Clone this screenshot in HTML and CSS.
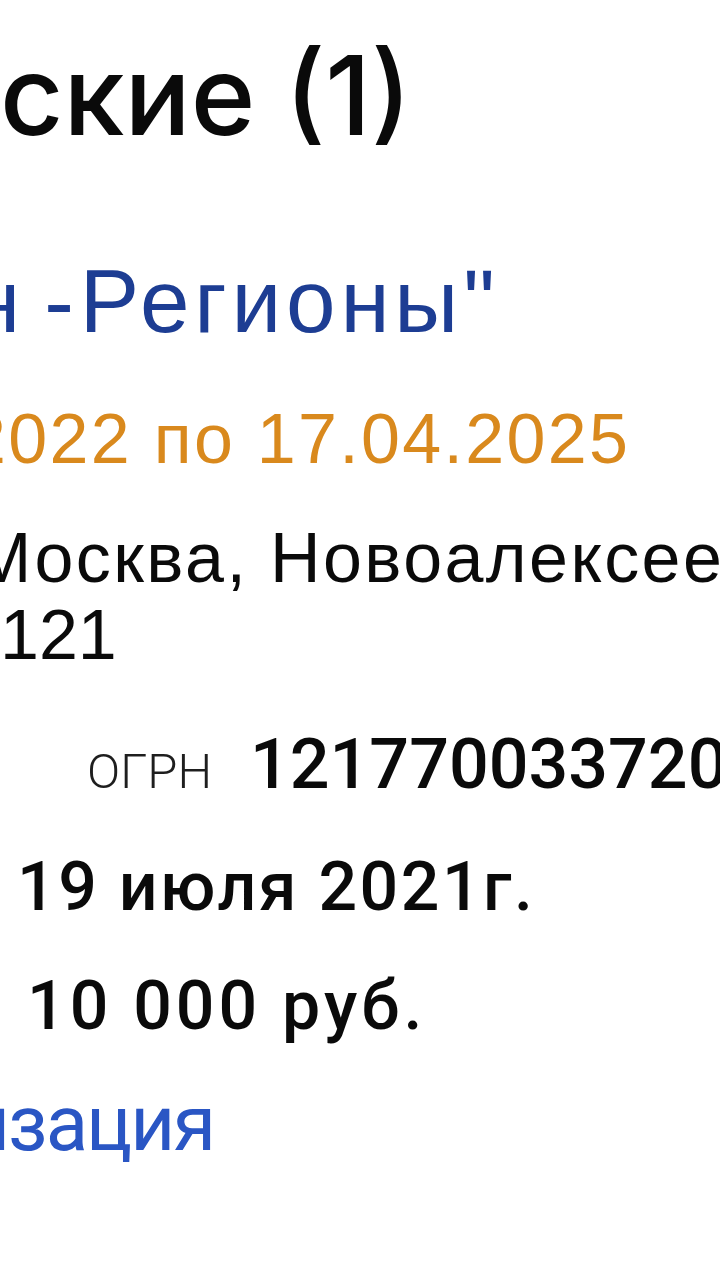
FILE: index.html
```html
<!DOCTYPE html>
<html lang="ru">
<head>
<meta charset="utf-8">
<link rel="stylesheet" href="styles.css">
</head>
<body>
<div class="page">
  <div class="title">ские (1)</div>
  <div class="company"><span class="cut-letter">н</span><span class="cut-dash">-</span>Регионы"</div>
  <div class="period">2022 по 17.04.2025</div>
  <div class="address">
    <div class="addr-line addr-first">Москва, Новоалексеевская</div>
    <div class="addr-line addr-second">121</div>
  </div>
  <div class="ogrn-row">
    <span class="ogrn-label">ОГРН</span>
    <span class="ogrn-value">1217700337205</span>
  </div>
  <div class="value date">19 июля 2021г.</div>
  <div class="value capital">10 000 руб.</div>
  <div class="link">изация</div>
</div>
</body>
</html>
```

FILE: styles.css
```css
html, body {
  margin: 0;
  padding: 0;
  background: #ffffff;
  width: 720px;
  height: 1280px;
  overflow: hidden;
}

.page {
  width: 720px;
  height: 1280px;
  overflow: hidden;
  display: flex;
  flex-direction: column;
  white-space: nowrap;
}

.title {
  font-family: "Inter", "Roboto", sans-serif;
  font-weight: 500;
  font-size: 110px;
  line-height: 130px;
  height: 130px;
  color: #0a0a0a;
  margin-top: 30px;
  margin-left: 0;
}

.company {
  font-family: "Liberation Sans", Arial, sans-serif;
  font-size: 89px;
  line-height: 100px;
  height: 100px;
  color: #1d3d93;
  margin-top: 91px;
  margin-left: -29px;
  letter-spacing: 4.8px;
}

.cut-letter {
  letter-spacing: 24px;
}

.cut-dash {
  letter-spacing: 6px;
}

.period {
  font-family: "Liberation Sans", Arial, sans-serif;
  font-size: 70px;
  line-height: 80px;
  height: 80px;
  color: #d9891d;
  margin-top: 48px;
  margin-left: -33px;
  letter-spacing: 2.3px;
}

.address {
  margin-top: 41px;
  font-family: "Liberation Sans", Arial, sans-serif;
  font-size: 70px;
  line-height: 77px;
  color: #0a0a0a;
}

.addr-line {
  height: 77px;
}

.addr-first {
  margin-left: -27px;
  letter-spacing: 2.4px;
}

.addr-second {
  margin-left: 0;
  letter-spacing: 0;
}

.ogrn-row {
  display: flex;
  align-items: baseline;
  margin-top: 50px;
  line-height: 80px;
}

.ogrn-label {
  font-family: "Roboto", sans-serif;
  font-weight: 300;
  font-size: 49px;
  color: #1e1e1e;
  margin-left: 87px;
  display: inline-block;
  width: 163px;
  flex: none;
}

.ogrn-value {
  font-family: "Roboto", sans-serif;
  font-weight: 500;
  font-size: 70px;
  color: #0a0a0a;
  letter-spacing: 0;
}

.value {
  font-family: "Roboto", sans-serif;
  font-weight: 500;
  font-size: 68px;
  line-height: 80px;
  height: 80px;
  color: #0a0a0a;
}

.date {
  margin-top: 35px;
  margin-left: 17px;
  letter-spacing: 2.5px;
}

.capital {
  margin-top: 39px;
  margin-left: 27px;
  letter-spacing: 4px;
}

.link {
  font-family: "Roboto", sans-serif;
  font-size: 78px;
  line-height: 90px;
  height: 90px;
  color: #2a56c4;
  margin-top: 33px;
  margin-left: -35px;
  letter-spacing: -2px;
}
```
